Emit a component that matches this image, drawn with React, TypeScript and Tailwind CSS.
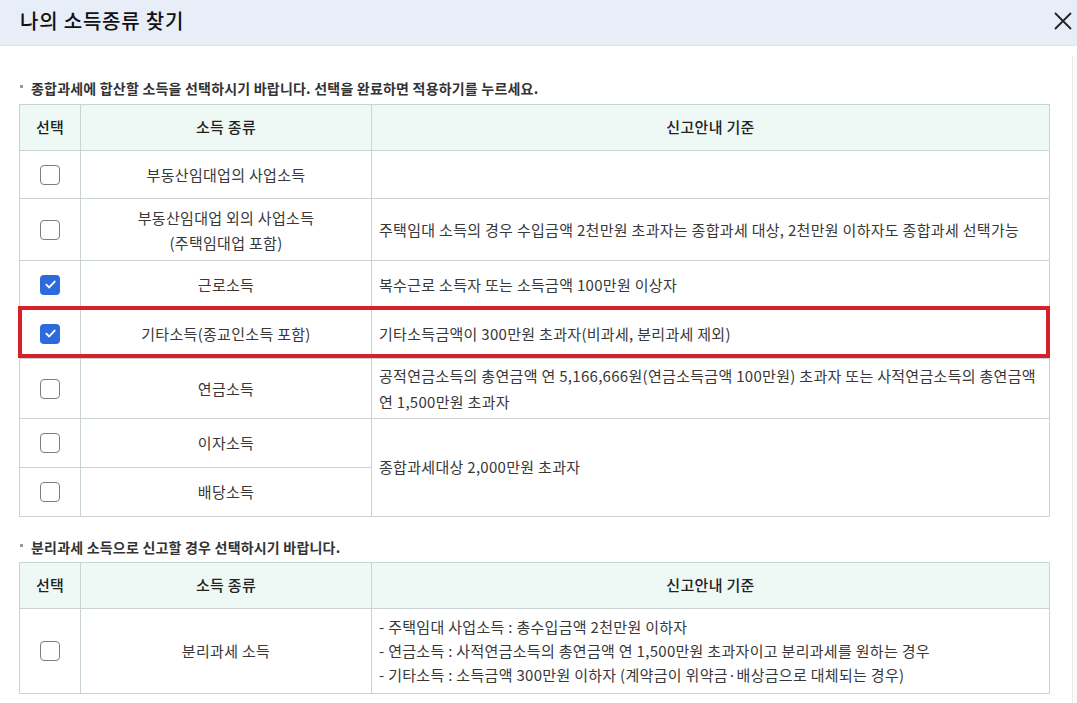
import React from "react";

interface IncomeRow {
  checked: boolean;
  name: string[];
  desc: string[];
  h: string;
  highlight?: boolean;
}

const rows: IncomeRow[] = [
  { checked: false, name: ["부동산임대업의 사업소득"], desc: [], h: "h-[48px]" },
  {
    checked: false,
    name: ["부동산임대업 외의 사업소득", "(주택임대업 포함)"],
    desc: ["주택임대 소득의 경우 수입금액 2천만원 초과자는 종합과세 대상, 2천만원 이하자도 종합과세 선택가능"],
    h: "h-[62px]",
  },
  { checked: true, name: ["근로소득"], desc: ["복수근로 소득자 또는 소득금액 100만원 이상자"], h: "h-[48px]" },
  {
    checked: true,
    name: ["기타소득(종교인소득 포함)"],
    desc: ["기타소득금액이 300만원 초과자(비과세, 분리과세 제외)"],
    h: "h-[50px]",
    highlight: true,
  },
  {
    checked: false,
    name: ["연금소득"],
    desc: [
      "공적연금소득의 총연금액 연 5,166,666원(연금소득금액 100만원) 초과자 또는 사적연금소득의 총연금액",
      "연 1,500만원 초과자",
    ],
    h: "h-[60px]",
  },
];

const Check = ({ checked }: { checked: boolean }) =>
  checked ? (
    <span className="flex h-[20px] w-[20px] items-center justify-center rounded-[4px] bg-[#2d6bdc]">
      <svg width="13" height="13" viewBox="0 0 14 14" fill="none">
        <path d="M2.5 7.2 5.6 10.2 11.5 3.8" stroke="#fff" strokeWidth="2" strokeLinecap="round" strokeLinejoin="round" />
      </svg>
    </span>
  ) : (
    <span className="block h-[20px] w-[20px] rounded-[4px] border border-[#7d7d7d] bg-white" />
  );

const Bullet = ({ children }: { children: React.ReactNode }) => (
  <div className="flex h-[20px] items-center text-[14px] font-bold tracking-[0.2px] text-[#333]">
    <span className="ml-[1px] mr-[8px] mb-[3px] h-[3px] w-[3px] bg-[#9a9a9a]" />
    {children}
  </div>
);

const HeadRow = () => (
  <div className="grid h-[46px] grid-cols-[61px_291px_1fr] border-b border-[#c9d3d3] bg-[#eef8f5] text-[15px] font-medium text-[#222]">
    <div className="flex items-center justify-center border-r border-[#c9d3d3]">선택</div>
    <div className="flex items-center justify-center border-r border-[#c9d3d3]">소득 종류</div>
    <div className="flex items-center justify-center border-r border-[#c9d3d3]">신고안내 기준</div>
  </div>
);

export default function App() {
  return (
    <div
      className="h-[703px] w-[1077px] overflow-hidden bg-white text-[#383838]"
      style={{ fontFamily: '"Noto Sans CJK KR", "Noto Sans", sans-serif' }}
    >
      {/* title bar */}
      <div className="flex h-[46px] items-center justify-between border-b border-[#dde4ef] bg-[#e8eef8] pb-[4px] pl-[20px] pr-[4px]">
        <h1 className="text-[20px] font-medium tracking-[0.8px] text-[#111]">나의 소득종류 찾기</h1>
        <svg width="20" height="20" viewBox="0 0 20 20" fill="none" className="mt-[1px]">
          <path d="M2 2 18 18M18 2 2 18" stroke="#222" strokeWidth="1.8" />
        </svg>
      </div>

      <div className="flex">
        <div className="w-[1072px] pl-[19px] pr-[22px] pt-[32px]">
          <Bullet>종합과세에 합산할 소득을 선택하시기 바랍니다. 선택을 완료하면 적용하기를 누르세요.</Bullet>

          <div className="mt-[6px] border-l border-t border-[#c9d3d3] text-[15px] tracking-[0.3px]">
            <HeadRow />
            {rows.map((r, i) => (
              <div
                key={i}
                className={`relative grid grid-cols-[61px_291px_1fr] border-b border-[#c9d3d3] ${r.h}`}
              >
                <div className="flex items-center justify-center border-r border-[#c9d3d3]">
                  <Check checked={r.checked} />
                </div>
                <div className="flex flex-col items-center justify-center border-r border-[#c9d3d3] leading-[25px]">
                  {r.name.map((n) => (
                    <span key={n}>{n}</span>
                  ))}
                </div>
                <div className="flex flex-col justify-center border-r border-[#c9d3d3] pl-[7px] leading-[26px]">
                  {r.desc.map((d) => (
                    <span key={d} className="whitespace-nowrap">{d}</span>
                  ))}
                </div>
                {r.highlight && (
                  <div className="pointer-events-none absolute -left-[2px] -top-[3px] bottom-0 right-0 border-4 border-[#d6202b]" />
                )}
              </div>
            ))}

            <div className="grid grid-cols-[61px_291px_1fr] grid-rows-[49px_48px] border-b border-[#c9d3d3]">
              <div className="flex items-center justify-center border-b border-r border-[#c9d3d3]">
                <Check checked={false} />
              </div>
              <div className="flex items-center justify-center border-b border-r border-[#c9d3d3]">이자소득</div>
              <div className="row-span-2 flex items-center border-r border-[#c9d3d3] pl-[7px]">
                종합과세대상 2,000만원 초과자
              </div>
              <div className="flex items-center justify-center border-r border-[#c9d3d3]">
                <Check checked={false} />
              </div>
              <div className="flex items-center justify-center border-r border-[#c9d3d3]">배당소득</div>
            </div>
          </div>

          <div className="mt-[20px]">
            <Bullet>분리과세 소득으로 신고할 경우 선택하시기 바랍니다.</Bullet>
          </div>

          <div className="mt-[5px] border-l border-t border-[#c9d3d3] text-[15px] tracking-[0.3px]">
            <HeadRow />
            <div className="grid h-[85px] grid-cols-[61px_291px_1fr] border-b border-[#c9d3d3]">
              <div className="flex items-center justify-center border-r border-[#c9d3d3]">
                <Check checked={false} />
              </div>
              <div className="flex items-center justify-center border-r border-[#c9d3d3]">분리과세 소득</div>
              <div className="flex flex-col justify-center border-r border-[#c9d3d3] pl-[7px] leading-[24px]">
                <span>- 주택임대 사업소득 : 총수입금액 2천만원 이하자</span>
                <span>- 연금소득 : 사적연금소득의 총연금액 연 1,500만원 초과자이고 분리과세를 원하는 경우</span>
                <span>- 기타소득 : 소득금액 300만원 이하자 (계약금이 위약금·배상금으로 대체되는 경우)</span>
              </div>
            </div>
          </div>
        </div>
        {/* faint scroll track */}
        <div className="mt-[10px] h-[650px] w-[5px] border-l border-[#ececec] bg-[#fafafa]" />
      </div>
    </div>
  );
}
